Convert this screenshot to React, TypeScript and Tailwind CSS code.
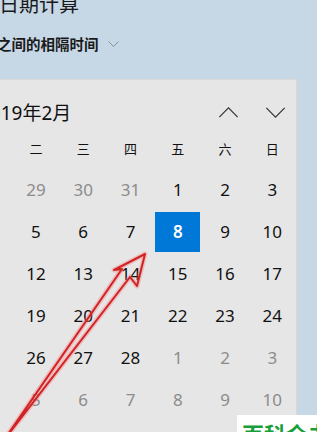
import React from 'react';

const weekdays = ['一', '二', '三', '四', '五', '六', '日'];

type Day = { n: number; muted?: boolean; selected?: boolean };

const rows: Day[][] = [
  [{ n: 28, muted: true }, { n: 29, muted: true }, { n: 30, muted: true }, { n: 31, muted: true }, { n: 1 }, { n: 2 }, { n: 3 }],
  [{ n: 4 }, { n: 5 }, { n: 6 }, { n: 7 }, { n: 8, selected: true }, { n: 9 }, { n: 10 }],
  [{ n: 11 }, { n: 12 }, { n: 13 }, { n: 14 }, { n: 15 }, { n: 16 }, { n: 17 }],
  [{ n: 18 }, { n: 19 }, { n: 20 }, { n: 21 }, { n: 22 }, { n: 23 }, { n: 24 }],
  [{ n: 25 }, { n: 26 }, { n: 27 }, { n: 28 }, { n: 1, muted: true }, { n: 2, muted: true }, { n: 3, muted: true }],
  [{ n: 4, muted: true }, { n: 5, muted: true }, { n: 6, muted: true }, { n: 7, muted: true }, { n: 8, muted: true }, { n: 9, muted: true }, { n: 10, muted: true }],
];

function Chevron({ up, className }: { up?: boolean; className?: string }) {
  return (
    <svg viewBox="0 0 22 12" className={className} fill="none" stroke="currentColor" strokeWidth="1.3">
      {up ? <path d="M1 11 L11 1 L21 11" /> : <path d="M1 1 L11 11 L21 1" />}
    </svg>
  );
}

export default function App() {
  return (
    <div
      className="relative w-[317px] h-[432px] overflow-hidden bg-[#c6d7e6] text-[#111]"
      style={{ fontFamily: '"Noto Sans", "Noto Sans CJK SC", sans-serif' }}
    >
      {/* page title */}
      <div className="-mt-[9px] -ml-[1px] text-[20px] leading-[28px] text-[#1a1a1a]">日期计算</div>

      {/* mode selector */}
      <div className="mt-[15px] -ml-[3px] flex items-center gap-[9px]">
        <span className="text-[14.5px] leading-[20px] font-bold text-[#1a1a1a]">之间的相隔时间</span>
        <Chevron className="w-[11px] h-[6px] text-[#666]" />
      </div>

      {/* calendar flyout */}
      <div className="mt-[25px] -ml-[36px] w-[333px] h-[400px] bg-[#e6e6e6] border border-[#d8d8d8]">
        <div className="h-[51px] pt-[14px] flex items-center justify-between pl-[14px] pr-[10px]">
          <span className="text-[19px] leading-[26px]">2019年2月</span>
          <div className="flex items-center gap-[26px]">
            <Chevron up className="w-[21px] h-[11px] text-[#333]" />
            <Chevron className="w-[21px] h-[11px] text-[#333]" />
          </div>
        </div>

        <div className="grid grid-cols-7 h-[38px] items-center text-center text-[13px]">
          {weekdays.map((w) => (
            <span key={w}>{w}</span>
          ))}
        </div>

        {rows.map((row, i) => (
          <div key={i} className="grid grid-cols-7 h-[42px]">
            {row.map((d, j) => (
              <div key={j} className="flex items-center justify-center py-[1px] px-[1px]">
                <div
                  className={
                    d.selected
                      ? 'w-full h-full flex items-center justify-center bg-[#0078d7] text-white font-semibold text-[17px]'
                      : d.muted
                      ? 'text-[17px] text-[#8c8c8c]'
                      : 'text-[17px]'
                  }
                >
                  {d.n}
                </div>
              </div>
            ))}
          </div>
        ))}
      </div>

      {/* annotation arrow */}
      <svg className="absolute left-0 top-0 w-[317px] h-[432px] pointer-events-none" viewBox="0 0 317 432">
        <polygon
          points="145,254 137,286 130,277 4,440 122,269 114,270"
          fill="none"
          stroke="rgba(255,110,110,0.35)"
          strokeWidth="5"
          strokeLinejoin="round"
        />
        <polygon
          points="145,254 137,286 130,277 4,440 122,269 114,270"
          fill="none"
          stroke="#cf2326"
          strokeWidth="2"
          strokeLinejoin="round"
        />
      </svg>

      {/* watermark */}
      <div className="absolute left-[237px] top-[415px] w-[100px] h-[30px] bg-white pl-[5px] pt-[5px]">
        <span className="text-[22px] leading-[28px] font-bold text-[#16a03a] whitespace-nowrap">百科全书</span>
      </div>
    </div>
  );
}
